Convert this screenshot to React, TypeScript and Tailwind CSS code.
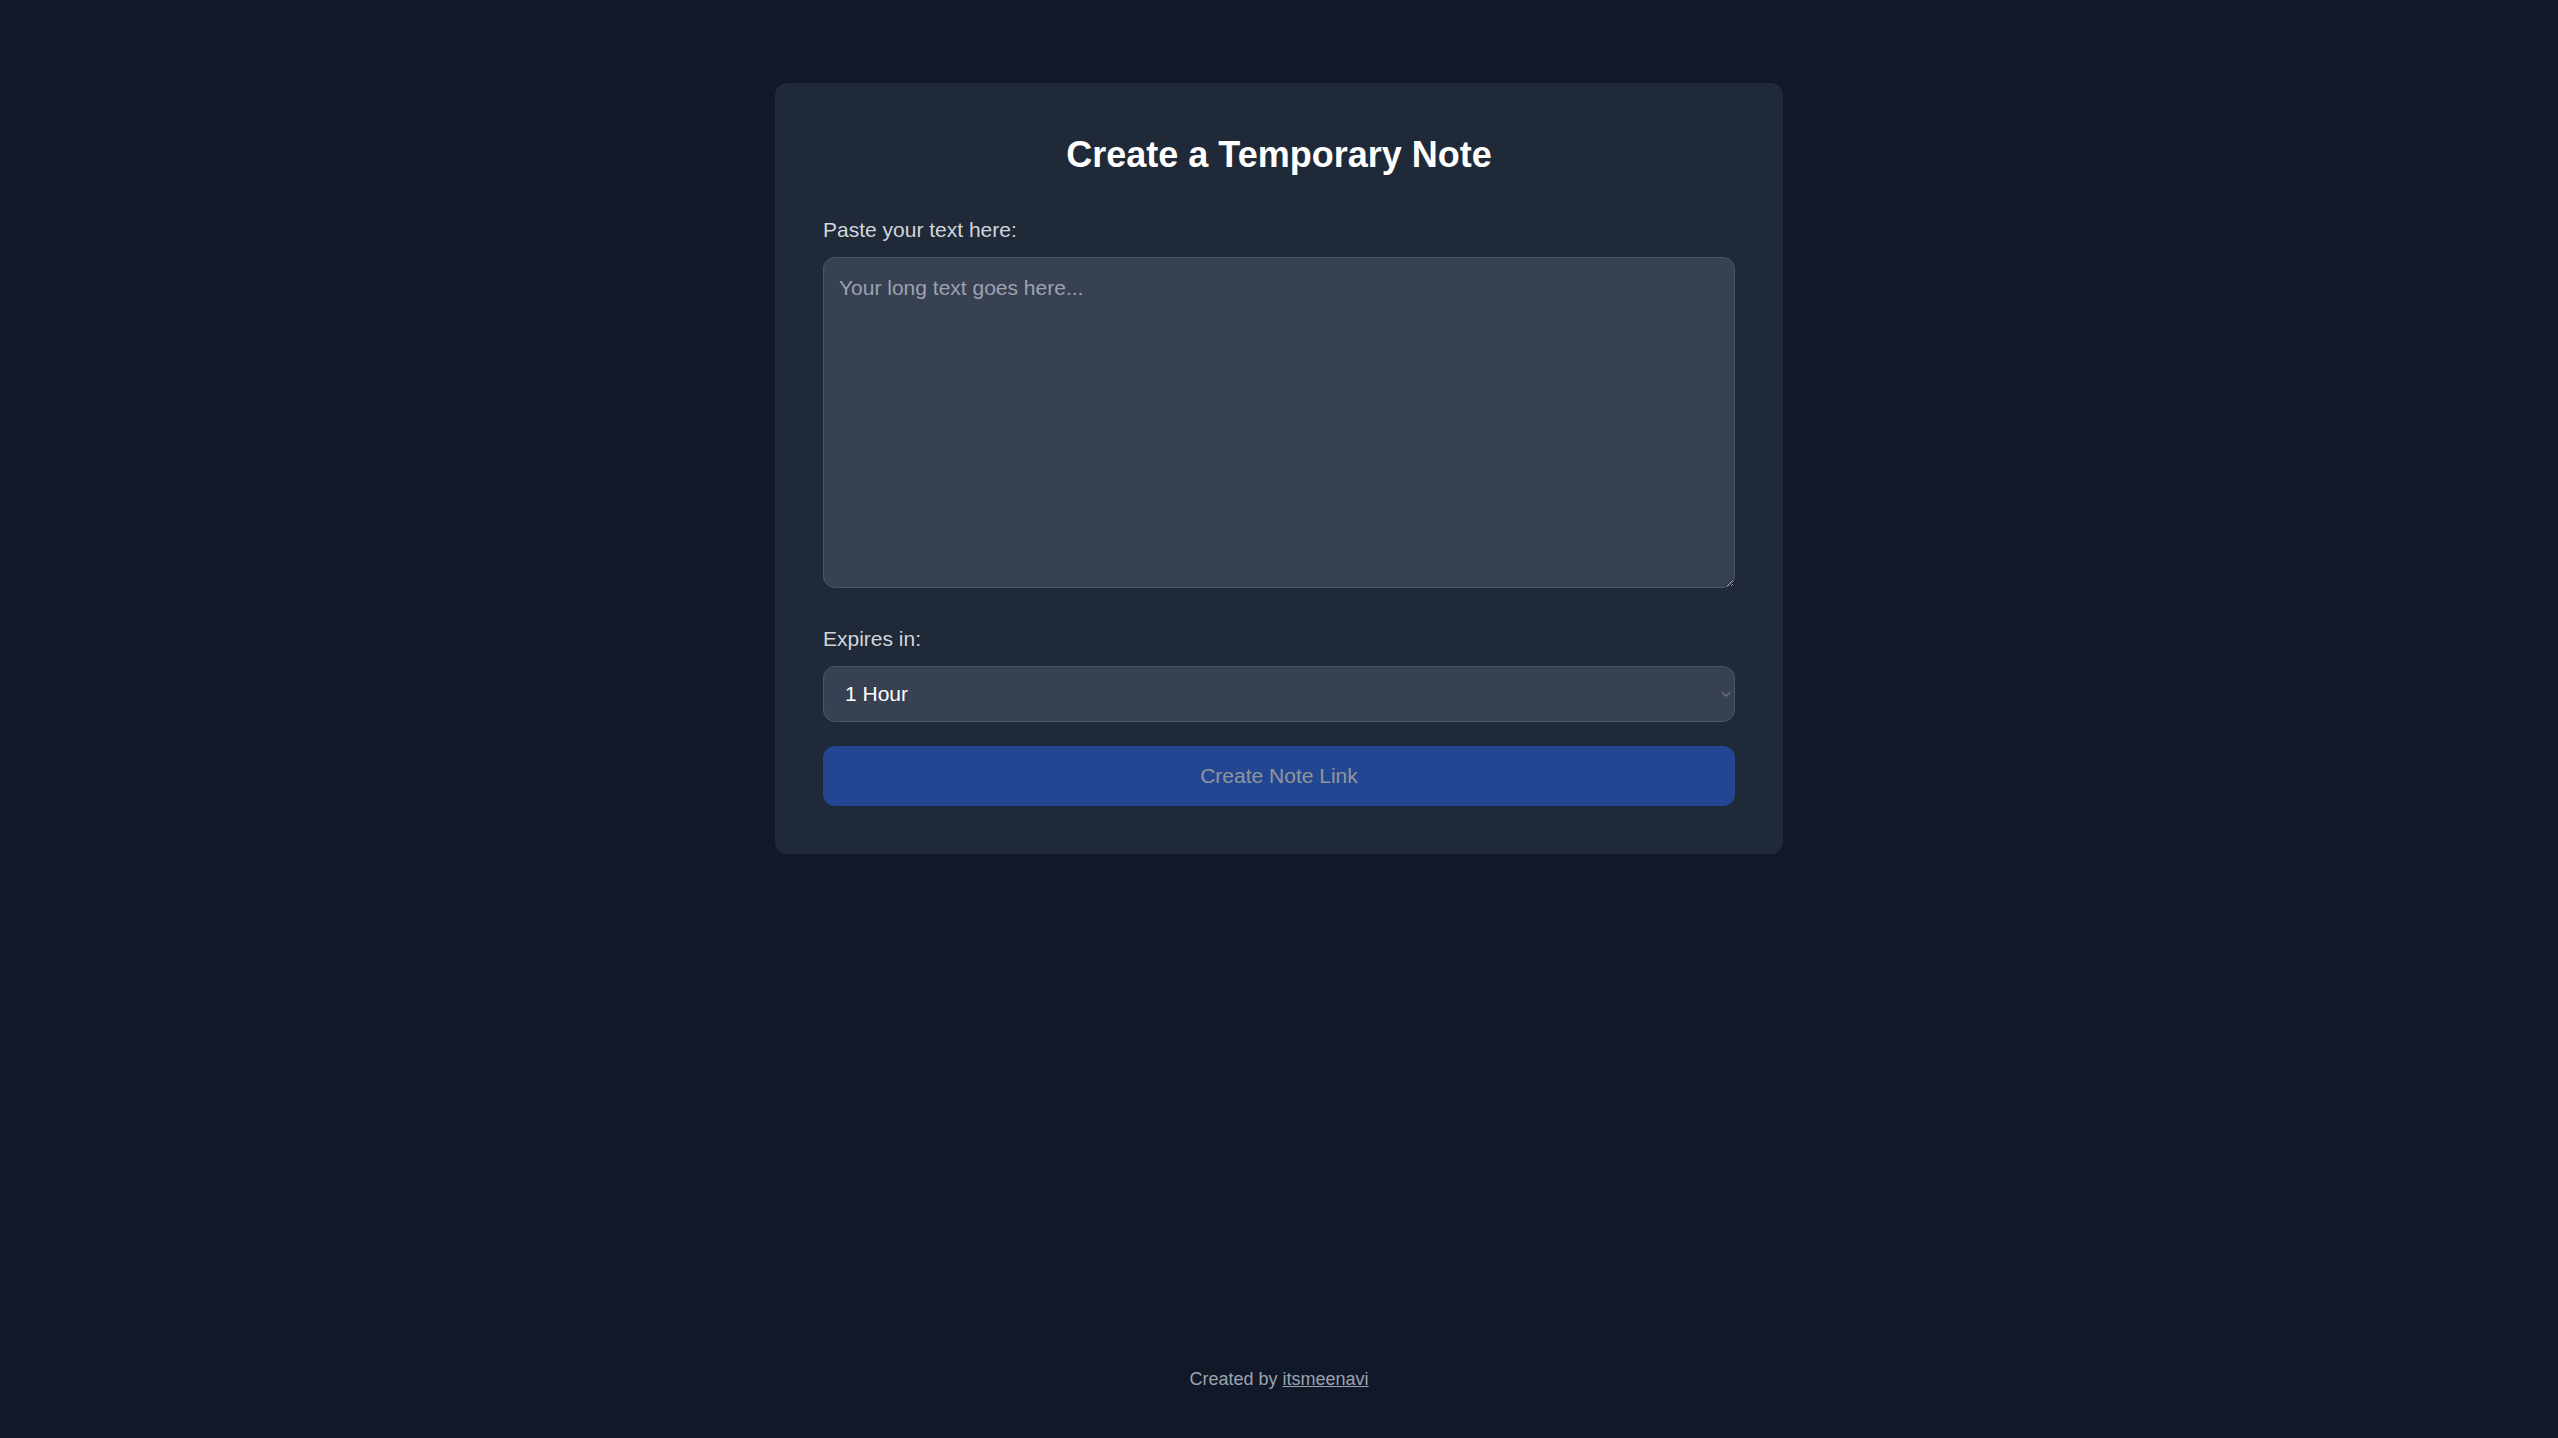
import React from "react";

export default function App() {
  return (
    <div
      className="min-h-screen w-full bg-[#111827] flex flex-col items-center"
      style={{ fontFamily: '"Liberation Sans", Arial, sans-serif' }}
    >
      <div className="mt-[83px] w-[1008px] rounded-[12px] bg-[#1f2937] p-[48px] flex flex-col">
        <h1 className="text-center text-[36px] leading-[48px] font-bold text-white mb-[36px]">
          Create a Temporary Note
        </h1>
        <label className="text-[21px] leading-[30px] text-[#d1d5db] mb-[12px]">
          Paste your text here:
        </label>
        <textarea
          placeholder="Your long text goes here..."
          className="h-[331px] w-full rounded-[12px] border-[1.5px] border-[#4b5563] bg-[#374151] px-[15px] py-[15px] text-[21px] leading-[30px] text-white placeholder:text-[#9ca3af] outline-none mb-[36px]"
        />
        <label className="text-[21px] leading-[30px] text-[#d1d5db] mb-[12px]">
          Expires in:
        </label>
        <div className="relative w-full">
          <select
            defaultValue="1h"
            className="h-[56px] w-full appearance-none rounded-[12px] border-[1.5px] border-[#4b5563] bg-[#374151] pl-[21px] pr-[30px] text-[21px] text-white outline-none"
          >
            <option value="1h">1 Hour</option>
            <option value="1d">1 Day</option>
            <option value="1w">1 Week</option>
          </select>
          <svg
            className="pointer-events-none absolute right-[4px] top-[25px]"
            width="10"
            height="7"
            viewBox="0 0 10 7"
            fill="none"
          >
            <path d="M1 1.5 L5 5 L9 1.5" stroke="#6b7280" strokeWidth="1.5" />
          </svg>
        </div>
        <button
          disabled
          className="mt-[24px] h-[60px] w-full rounded-[12px] bg-[#2563eb] text-[21px] text-white opacity-50"
        >
          Create Note Link
        </button>
      </div>
      <footer className="mt-auto pb-[47px] text-[18px] leading-[24px] text-[#9ca3af]">
        Created by{" "}
        <a href="#" className="underline text-[#9ca3af]">
          itsmeenavi
        </a>
      </footer>
    </div>
  );
}
